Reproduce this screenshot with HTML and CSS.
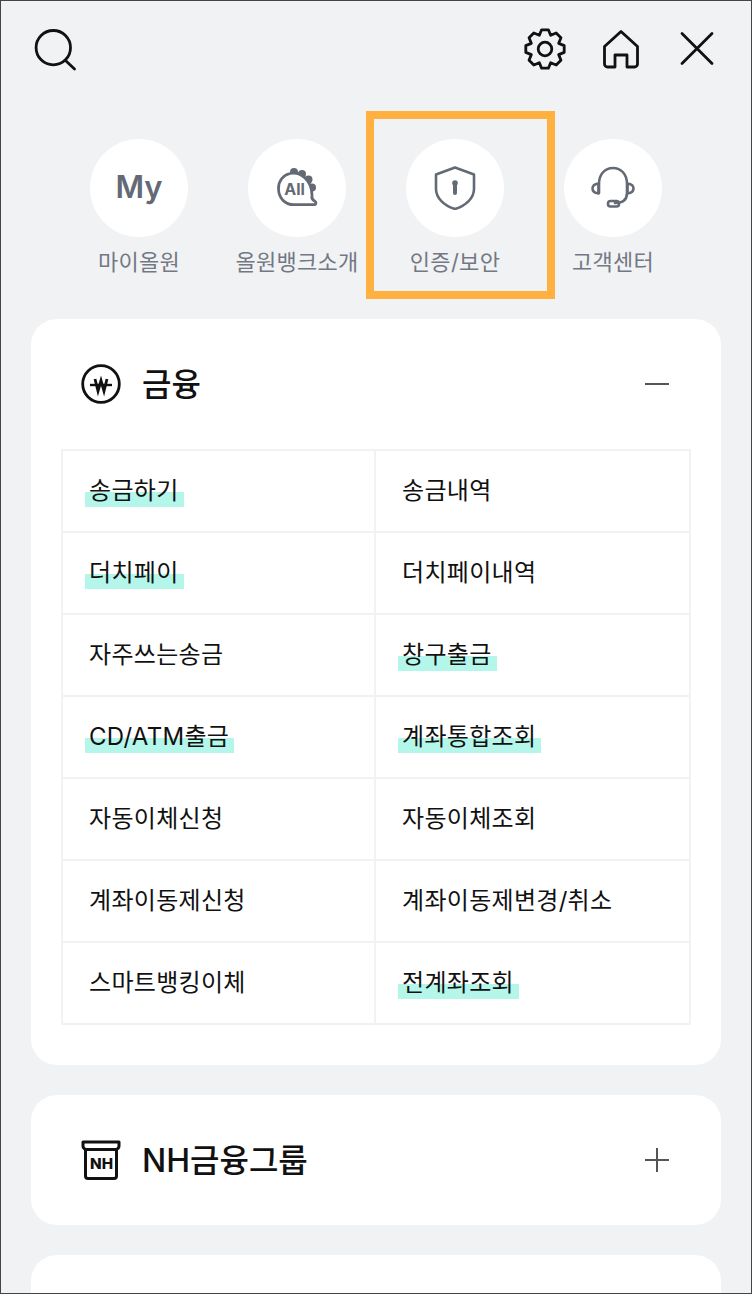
FILE: index.html
```html
<!DOCTYPE html>
<html lang="ko">
<head>
    <meta charset="UTF-8">
    <meta name="viewport" content="width=device-width, initial-scale=1.0">
    <title>전체메뉴</title>
    <link rel="stylesheet" href="styles.css">
</head>
<body>
    <div class="screen">
        <header class="top-bar">
            <a href="#" class="top-btn" aria-label="검색">
                <svg viewBox="0 0 48 48" width="48" height="48" fill="none" stroke="#111" stroke-width="2.8" stroke-linecap="round">
                    <circle cx="24.3" cy="23.7" r="17.2"/>
                    <path d="M36.5 36.5 45.5 45"/>
                </svg>
            </a>
            <div class="top-actions">
                <a href="#" class="top-btn" aria-label="설정">
                    <svg viewBox="0 0 48 48" width="48" height="48" fill="none" stroke="#111" stroke-width="2.8" stroke-linejoin="round">
                        <polygon transform="translate(24 25)" points="3.39,-19.2 5.66,-13.67 11.18,-15.97 15.97,-11.18 13.67,-5.66 19.2,-3.39 19.2,3.39 13.67,5.66 15.97,11.18 11.18,15.97 5.66,13.67 3.39,19.2 -3.39,19.2 -5.66,13.67 -11.18,15.97 -15.97,11.18 -13.67,5.66 -19.2,3.39 -19.2,-3.39 -13.67,-5.66 -15.97,-11.18 -11.18,-15.97 -5.66,-13.67 -3.39,-19.2"/>
                        <circle cx="24" cy="25" r="6.8"/>
                    </svg>
                </a>
                <a href="#" class="top-btn" aria-label="홈">
                    <svg viewBox="0 0 48 48" width="48" height="48" fill="none" stroke="#111" stroke-width="2.8" stroke-linejoin="round">
                        <path d="M24 7.5 7.5 22.5V40a3 3 0 0 0 3 3H18V31H30V43H37.5a3 3 0 0 0 3-3V22.5Z"/>
                    </svg>
                </a>
                <a href="#" class="top-btn" aria-label="닫기">
                    <svg viewBox="0 0 48 48" width="48" height="48" fill="none" stroke="#111" stroke-width="2.8" stroke-linecap="round">
                        <path d="M9 9.5 39 39.5M39 9.5 9 39.5"/>
                    </svg>
                </a>
            </div>
        </header>

        <nav class="quick-menu">
            <a href="#" class="quick-item">
                <span class="quick-circle quick-my">My</span>
                <span class="quick-label">마이올원</span>
            </a>
            <a href="#" class="quick-item">
                <span class="quick-circle">
                    <svg viewBox="0 0 44 44" width="44" height="44" fill="none" stroke="#646a75" stroke-width="2.8" stroke-linecap="round" stroke-linejoin="round">
                        <g fill="#646a75" stroke="none">
                            <circle cx="19" cy="6" r="4"/>
                            <circle cx="27" cy="8" r="4"/>
                            <circle cx="33.500" cy="13.500" r="4"/>
                            <circle cx="37" cy="21.500" r="4"/>
                        </g>
                        <path fill="#fff" d="M15 7.500C25 5 37 14 37 29.500 36.500 32 37.500 34 39.500 35 41.500 36 41.500 38.700 38.500 38.700H19C10 38.700 3.500 32 3.500 22.500 3.500 15 8 9 15 7.500Z"/>
                        <text x="19.500" y="29" text-anchor="middle" class="all-text">All</text>
                    </svg>
                </span>
                <span class="quick-label">올원뱅크소개</span>
            </a>
            <a href="#" class="quick-item">
                <span class="quick-circle">
                    <svg viewBox="0 0 44 44" width="44" height="44" fill="none" stroke="#646a75" stroke-width="2.6" stroke-linejoin="round">
                        <path d="M22 1.500 41 8.500V23C41 32 33 39.500 22 43 11 39.500 3 32 3 23V8.500Z"/>
                        <circle cx="22" cy="17" r="2.800" fill="#646a75" stroke="none"/>
                        <path d="M22 17V27" stroke-width="4" stroke-linecap="round"/>
                    </svg>
                </span>
                <span class="quick-label">인증/보안</span>
            </a>
            <a href="#" class="quick-item">
                <span class="quick-circle">
                    <svg viewBox="0 0 44 44" width="44" height="44" fill="none" stroke="#646a75" stroke-width="2.6" stroke-linecap="round" stroke-linejoin="round">
                        <path d="M8 27V18C8 8 14 2 22 2s14 6 14 16v9c0 7-5 10-12 10"/>
                        <path d="M7.500 17.500C4 18 1.500 20 1.500 22.500s2.500 4.500 6 5Z"/>
                        <path d="M36.500 17.500c3.500.5 6 2.500 6 5s-2.500 4.500-6 5Z"/>
                        <rect x="17" y="35" width="11" height="5.500" rx="2.500"/>
                    </svg>
                </span>
                <span class="quick-label">고객센터</span>
            </a>
            <span class="focus-box"></span>
        </nav>

        <section class="card">
            <div class="card-head">
                <svg viewBox="0 0 40 40" width="40" height="40" fill="none" stroke="#111" stroke-width="2.800">
                    <circle cx="20" cy="20" r="18.300"/>
                    <path d="M14 15 17 27 20 16.500 23 27 26 15" stroke-width="2.800"/>
                    <path d="M9 21H31" stroke-width="2.400"/>
                </svg>
                <h2 class="card-title">금융</h2>
                <span class="toggle toggle-minus"></span>
            </div>
            <ul class="menu-grid">
                <li><a href="#"><span class="hl">송금하기</span></a></li>
                <li><a href="#">송금내역</a></li>
                <li><a href="#"><span class="hl">더치페이</span></a></li>
                <li><a href="#">더치페이내역</a></li>
                <li><a href="#">자주쓰는송금</a></li>
                <li><a href="#"><span class="hl">창구출금</span></a></li>
                <li><a href="#"><span class="hl">CD/ATM출금</span></a></li>
                <li><a href="#"><span class="hl">계좌통합조회</span></a></li>
                <li><a href="#">자동이체신청</a></li>
                <li><a href="#">자동이체조회</a></li>
                <li><a href="#">계좌이동제신청</a></li>
                <li><a href="#">계좌이동제변경/취소</a></li>
                <li><a href="#">스마트뱅킹이체</a></li>
                <li><a href="#"><span class="hl">전계좌조회</span></a></li>
            </ul>
        </section>

        <section class="card card-closed">
            <div class="card-head">
                <svg viewBox="0 0 40 40" width="40" height="40" fill="none" stroke="#111" stroke-width="3" stroke-linejoin="round">
                    <path d="M2 2H38V6A3.500 3.500 0 0 1 34.500 9.500H5.500A3.500 3.500 0 0 1 2 6Z"/>
                    <path d="M4.500 9.500V36a2.500 2.500 0 0 0 2.500 2.500H33A2.500 2.500 0 0 0 35.500 36V9.500"/>
                    <text x="20.500" y="29" text-anchor="middle" textLength="23" lengthAdjust="spacingAndGlyphs" class="nh-text">NH</text>
                </svg>
                <h2 class="card-title">NH금융그룹</h2>
                <span class="toggle toggle-plus"></span>
            </div>
        </section>

        <section class="card card-closed card-empty"></section>
    </div>
</body>
</html>
```

FILE: styles.css
```css
:root {
    --page-bg: #f1f2f4;
    --text-color: #111;
    --muted: #737884;
    --icon-gray: #646a75;
    --line: #f1f2f3;
}

* {
    box-sizing: border-box;
    margin: 0;
    padding: 0;
}

html, body {
    height: 100%;
}

body {
    font-family: "Inter", "Noto Sans CJK KR", "Noto Sans", sans-serif;
    color: var(--text-color);
    background-color: var(--page-bg);
}

a {
    color: inherit;
    text-decoration: none;
}

.screen {
    height: 1294px;
    overflow: hidden;
    border: 1px solid #444;
    background-color: var(--page-bg);
}

.top-bar {
    display: flex;
    justify-content: space-between;
    padding: 23px 30px 0 28px;
}

.top-actions {
    display: flex;
    gap: 28px;
}

.top-btn {
    display: block;
    width: 48px;
    height: 48px;
}

.top-btn svg {
    display: block;
}

.quick-menu {
    position: relative;
    display: flex;
    justify-content: center;
    gap: 60px;
    margin-top: 67px;
    height: 180px;
}

.quick-item {
    display: flex;
    flex-direction: column;
    align-items: center;
    width: 98px;
}

.quick-circle {
    display: flex;
    align-items: center;
    justify-content: center;
    flex: none;
    width: 98px;
    height: 98px;
    border-radius: 50%;
    background-color: #fff;
}

.quick-my {
    padding-bottom: 3px;
    font-size: 31px;
    font-weight: 600;
    color: var(--icon-gray);
}

.all-text {
    font-size: 16px;
    font-weight: 700;
    fill: var(--icon-gray);
    stroke: none;
}

.nh-text {
    font-size: 14px;
    font-weight: 800;
    fill: #111;
    stroke: none;
}

.quick-label {
    margin-top: 7px;
    font-size: 22px;
    line-height: 36px;
    letter-spacing: 0.3px;
    white-space: nowrap;
    color: var(--muted);
}

.focus-box {
    position: absolute;
    left: 365px;
    top: -28px;
    width: 189px;
    height: 188px;
    border: 8px solid #ffb03f;
}

.card {
    margin: 0 30px 30px;
    border-radius: 26px;
    background-color: #fff;
    padding: 0 30px 40px;
}

.card-closed {
    padding-bottom: 0;
}

.card-empty {
    height: 130px;
}

.card-head {
    display: flex;
    align-items: center;
    gap: 21px;
    height: 130px;
    padding: 0 20px;
}

.card-head svg {
    flex: none;
}

.card-title {
    flex: 1;
    padding-bottom: 4px;
    font-size: 32px;
    font-weight: 500;
}

.toggle {
    position: relative;
    width: 24px;
    height: 24px;
    margin-right: 2px;
}

.toggle::before,
.toggle-plus::after {
    content: "";
    position: absolute;
    left: 0;
    top: 11px;
    width: 24px;
    height: 2px;
    background-color: #555;
}

.toggle-plus::after {
    transform: rotate(90deg);
}

.menu-grid {
    display: grid;
    grid-template-columns: 313px 1fr;
    list-style: none;
    border-top: 2px solid var(--line);
    border-left: 2px solid var(--line);
}

.menu-grid li {
    height: 82px;
    border-right: 2px solid var(--line);
    border-bottom: 2px solid var(--line);
}

.menu-grid a {
    display: block;
    padding-left: 26px;
    font-size: 24px;
    line-height: 80px;
    letter-spacing: 0.3px;
    white-space: nowrap;
}

.hl {
    display: inline-block;
    vertical-align: top;
    margin: 24px 0 0 -4px;
    padding: 0 5px 0 4px;
    line-height: 32px;
    background: linear-gradient(#b5f6ea, #b5f6ea) left bottom / 100% 15px no-repeat;
}
```
